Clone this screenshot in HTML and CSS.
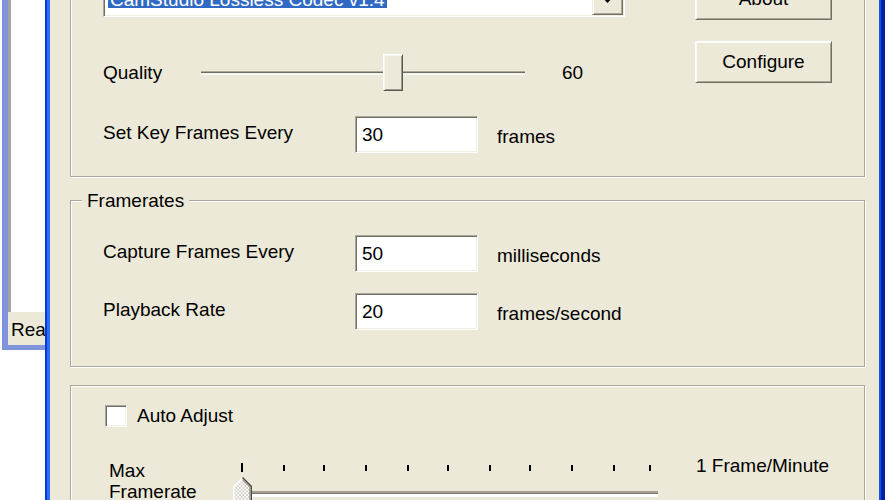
FILE: index.html
```html
<!DOCTYPE html>
<html>
<head>
<meta charset="utf-8">
<title>Video Options</title>
<link rel="stylesheet" href="styles.css">
</head>
<body>
<div class="screen">
  <div class="backwin">
    <div class="bw-client"></div>
    <div class="bw-status">Ready</div>
  </div>
  <div class="dialog">
    <div class="dlg-frame">
      <div class="dlg-body">
        <div class="group g-codec">
          <div class="codec-left">
            <div class="combo">
              <div class="combo-field"><span class="sel">CamStudio Lossless Codec v1.4</span></div>
              <div class="combo-btn">
                <svg class="arrow" width="13" height="7" viewBox="0 0 13 7"><polygon points="0,0 13,0 6.5,7" fill="#000"/></svg>
              </div>
            </div>
            <div class="row row-quality">
              <span class="lbl lbl-q">Quality</span>
              <div class="trackbar">
                <div class="channel"></div>
                <div class="thumb" style="left:182px"></div>
              </div>
              <span class="val">60</span>
            </div>
            <div class="row row-key">
              <span class="lbl lbl-w">Set Key Frames Every</span>
              <div class="edit">30</div>
              <span class="unit">frames</span>
            </div>
          </div>
          <div class="codec-right">
            <div class="btn">About</div>
            <div class="btn">Configure</div>
          </div>
        </div>

        <div class="group g-rates">
          <div class="legend">Framerates</div>
          <div class="row rate-row1">
            <span class="lbl lbl-w">Capture Frames Every</span>
            <div class="edit">50</div>
            <span class="unit">milliseconds</span>
          </div>
          <div class="row rate-row2">
            <span class="lbl lbl-w">Playback Rate</span>
            <div class="edit">20</div>
            <span class="unit">frames/second</span>
          </div>
        </div>

        <div class="group g-auto">
          <div class="check-row">
            <span class="check"></span>
            <span class="check-lbl">Auto Adjust</span>
          </div>
          <div class="max-row">
            <div class="max-lbl">Max<br>Framerate</div>
            <svg class="max-slider" width="432" height="45" viewBox="0 0 432 45">
              <defs>
                <pattern id="dither" width="3.6" height="3.6" patternUnits="userSpaceOnUse">
                  <rect width="3.6" height="3.6" fill="#ffffff"/>
                  <rect width="1.8" height="1.8" fill="#d3d0c4"/>
                  <rect x="1.8" y="1.8" width="1.8" height="1.8" fill="#d3d0c4"/>
                </pattern>
              </defs>
              <g fill="#000">
                <rect x="11" y="3" width="2" height="9"/>
                <rect x="53" y="5" width="2" height="6"/>
                <rect x="93" y="5" width="2" height="6"/>
                <rect x="135" y="5" width="2" height="6"/>
                <rect x="177" y="5" width="2" height="6"/>
                <rect x="217" y="5" width="2" height="6"/>
                <rect x="259" y="5" width="2" height="6"/>
                <rect x="299" y="5" width="2" height="6"/>
                <rect x="341" y="5" width="2" height="6"/>
                <rect x="383" y="5" width="2" height="6"/>
                <rect x="419" y="5" width="2" height="6"/>
              </g>
              <rect x="7" y="31" width="421" height="1.5" fill="#a5a293"/>
              <rect x="7" y="32.5" width="421" height="1.5" fill="#7f7c6f"/>
              <rect x="7" y="34" width="421" height="3" fill="#ffffff"/>
              <polygon points="3,45 3,26.5 12.5,17 22,26.5 22,45" fill="url(#dither)"/>
              <polyline points="3.7,45 3.7,26.8 12.5,18" fill="none" stroke="#ffffff" stroke-width="1.4"/>
              <polyline points="12.5,17.6 21.3,26.4 21.3,45" fill="none" stroke="#4a4840" stroke-width="1.4"/>
              <polyline points="12.5,19.6 19.8,26.9 19.8,45" fill="none" stroke="#9d9a8b" stroke-width="1.2"/>
            </svg>
            <span class="max-val">1 Frame/Minute</span>
          </div>
        </div>
      </div>
    </div>
  </div>
</div>
</body>
</html>
```

FILE: styles.css
```css
* { box-sizing: border-box; }
html, body { margin: 0; padding: 0; }
body {
  width: 888px;
  height: 500px;
  overflow: hidden;
  background: #ffffff;
  font-family: "Liberation Sans", Arial, sans-serif;
  font-size: 19px;
  color: #000;
}
.screen { display: flex; height: 500px; }

/* window behind the dialog */
.backwin {
  flex: none;
  width: 43px;
  height: 350px;
  margin-left: 2px;
  border-left: 6px solid #8094dc;
  border-bottom: 5px solid #8094dc;
  display: flex;
  flex-direction: column;
  overflow: hidden;
}
.bw-client { flex: 1; background: #fff; border-left: 3px solid #a3a3a3; }
.bw-status {
  flex: none;
  height: 33px;
  background: #ece9d8;
  padding: 2px 0 0 3px;
  line-height: 31px;
  white-space: nowrap;
}

/* dialog frame */
.dialog {
  flex: none;
  width: 840px;
  height: 500px;
  border-left: 2px solid #0a3ad3;
  border-right: 4px solid #0020a8;
  display: flex;
}
.dlg-frame {
  flex: 1;
  min-width: 0;
  border-left: 3px solid #2a6ef5;
  border-right: 2px solid #1552e6;
  background: #ece9d8;
  padding: 0 14px 0 20px;
  display: flex;
  flex-direction: column;
  overflow: hidden;
}
.dlg-body { flex: none; margin-top: -50px; display: flex; flex-direction: column; }

.group {
  flex: none;
  width: 795px;
  border: 1px solid #aca899;
  box-shadow: inset 1px 1px 0 #fff, 1px 1px 0 #fff;
}

/* codec group */
.g-codec {
  display: grid;
  grid-template-columns: 522px 137px;
  column-gap: 70px;
  align-items: start;
  padding: 24px 32px 23px;
}
.codec-left { display: flex; flex-direction: column; }
.combo {
  height: 42px;
  display: flex;
  background: #fff;
  border: 1px solid;
  border-color: #aca899 #fff #fff #aca899;
  box-shadow: inset 1px 1px 0 #716f64, inset -1px -1px 0 #f1efe2;
  padding: 1px;
}
.combo-field {
  flex: 1;
  display: flex;
  align-items: flex-end;
  padding: 0 0 7px 3px;
}
.sel {
  background: #316ac5;
  color: #fff;
  height: 16px;
  line-height: 16px;
  padding: 0 2px;
  white-space: nowrap;
}
.combo-btn {
  flex: none;
  width: 31px;
  background: #ece9d8;
  border: 1px solid;
  border-color: #f1efe2 #716f64 #716f64 #f1efe2;
  box-shadow: inset 1px 1px 0 #fff, inset -1px -1px 0 #aca899;
  display: flex;
  justify-content: center;
  align-items: flex-end;
  padding-bottom: 11px;
}
.arrow { display: block; }

.row { display: flex; align-items: center; height: 37px; white-space: nowrap; }
.row-quality { margin-top: 37px; }
.row-key { margin-top: 25px; }
.lbl-q { width: 98px; flex: none; }
.lbl-w { width: 252px; flex: none; padding-bottom: 4px; }
.trackbar {
  position: relative;
  flex: none;
  width: 324px;
  height: 37px;
  display: flex;
  align-items: center;
}
.channel {
  width: 100%;
  height: 4px;
  background: linear-gradient(#aca899 0 1px, #716f64 1px 2px, #f1efe2 2px 3px, #fff 3px 4px);
}
.thumb {
  position: absolute;
  top: 0;
  width: 20px;
  height: 37px;
  background: #ece9d8;
  border: 1px solid;
  border-color: #fff #5a5850 #5a5850 #fff;
  box-shadow: inset 1px 1px 0 #f6f5ee, inset -1px -1px 0 #9d9a8b;
}
.val { margin-left: 37px; }
.edit {
  flex: none;
  width: 123px;
  height: 37px;
  background: #fff;
  border: 1px solid;
  border-color: #aca899 #fff #fff #aca899;
  box-shadow: inset 1px 1px 0 #716f64, inset -1px -1px 0 #f1efe2;
  padding-left: 6px;
  display: flex;
  align-items: center;
}
.unit { margin-left: 19px; padding-top: 4px; }

.codec-right { display: flex; flex-direction: column; gap: 21px; padding-top: 3px; }
.btn {
  height: 42px;
  display: flex;
  align-items: center;
  justify-content: center;
  background: #ece9d8;
  border: 1px solid;
  border-color: #fff #716f64 #716f64 #fff;
  box-shadow: inset 1px 1px 0 #fbfaf5, inset -1px -1px 0 #aca899;
}

/* framerates group */
.g-rates { margin-top: 23px; padding: 0 0 36px; }
.legend {
  width: max-content;
  height: 20px;
  line-height: 20px;
  margin: -10px 0 0 11px;
  padding: 0 5px;
  background: #ece9d8;
}
.g-rates .row { padding-left: 32px; }
.rate-row1 { margin-top: 24px; }
.rate-row2 { margin-top: 21px; }

/* auto adjust group */
.g-auto { margin-top: 18px; height: 200px; padding: 19px 0 0 34px; }
.check-row { display: flex; align-items: center; height: 22px; line-height: 22px; }
.check {
  flex: none;
  width: 22px;
  height: 22px;
  background: #fff;
  border: 1px solid;
  border-color: #aca899 #fff #fff #aca899;
  box-shadow: inset 1px 1px 0 #716f64, inset -1px -1px 0 #f1efe2;
  margin-right: 10px;
}
.max-row { display: flex; align-items: flex-start; margin-top: 33px; }
.max-lbl { flex: none; width: 125px; padding-left: 4px; line-height: 21px; }
.max-slider { flex: none; display: block; }
.max-val { margin: -5px 0 0 34px; line-height: 21px; white-space: nowrap; }
```
